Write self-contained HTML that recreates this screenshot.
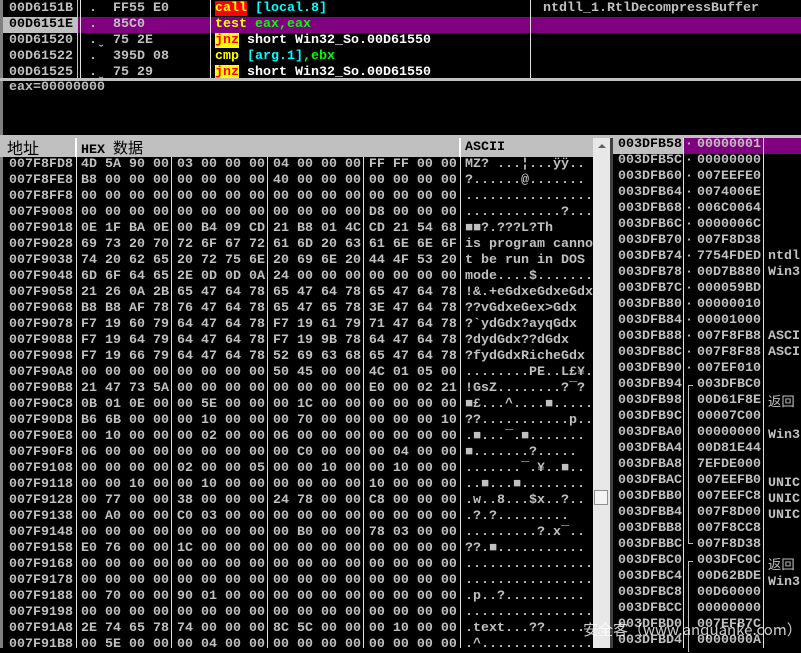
<!DOCTYPE html>
<html><head><meta charset="utf-8"><style>
*{margin:0;padding:0}
body{width:801px;height:648px;background:#000;position:relative;overflow:hidden;font-family:"Liberation Mono","Noto Sans CJK SC",monospace;font-weight:bold;font-size:13.33px;color:#c0c0c0}
.a{position:absolute}
pre{position:absolute;font:inherit;line-height:16px;white-space:pre;margin:0}
.vl{position:absolute;width:1px;background:#e0e0e0}
.g{background:#c0c0c0}
.y{color:#ffff00}.c{color:#00ffff}.gr{color:#00ff00}.w{color:#fff}
</style></head><body>
<div class="a" style="left:0;top:0;width:3px;height:80px;background:#808080"></div>
<div class="a" style="top:17px;left:3px;width:798px;height:16px;background:#800080"></div>
<div class="a g" style="left:3px;top:17px;width:74px;height:16px"></div>
<pre style="left:9px;top:1px;color:#c0c0c0">00D6151B
<span style="color:#000">00D6151E</span>
00D61520
00D61522
00D61525</pre>
<div class="vl" style="left:77px;top:0;height:78px;background:#c0c0c0"></div>
<div class="vl" style="left:80px;top:0;height:78px"></div>
<pre style="left:89px;top:1px">.  FF55 E0
.  85C0
.ˬ 75 2E
.  395D 08
.ˬ 75 29</pre>
<div class="vl" style="left:210px;top:0;height:78px"></div>
<pre style="left:215px;top:1px"><span class="y" style="background:#ff0000">call</span> <span class="c">[local.8]</span>
<span class="y">test</span> <span class="gr">eax,eax</span>
<span style="color:#ff0000;background:#ffff00">jnz</span> <span class="w">short Win32_So.00D61550</span>
<span class="y">cmp</span> <span class="c">[arg.1]</span><span class="gr">,ebx</span>
<span style="color:#ff0000;background:#ffff00">jnz</span> <span class="w">short Win32_So.00D61550</span></pre>
<div class="vl" style="left:530px;top:0;height:78px"></div>
<pre style="left:543px;top:1px">ntdll_1.RtlDecompressBuffer</pre>
<div class="a g" style="left:0;top:78px;width:801px;height:3px"></div>
<div class="a" style="left:0;top:81px;width:3px;height:56px;background:#808080"></div>
<pre style="left:9px;top:80px">eax=00000000</pre>
<div class="a g" style="left:0;top:135px;width:801px;height:3px"></div>
<div class="a g" style="left:0;top:138px;width:610px;height:19px"></div>
<div class="a" style="left:0;top:157px;width:3px;height:491px;background:#808080"></div>
<div class="a" style="left:75px;top:138px;width:2px;height:19px;background:#fff"></div>
<div class="a" style="left:459px;top:138px;width:2px;height:19px;background:#fff"></div>
<div class="a" style="font-family:'Noto Sans CJK SC',sans-serif;font-weight:normal;font-size:16px;line-height:19px;color:#000;left:7px;top:138px">地址</div>
<div class="a" style="color:#000;left:81px;top:138px;line-height:19px;font-size:13.33px">HEX <span style="font-family:'Noto Sans CJK SC',sans-serif;font-weight:normal;font-size:15px">数据</span></div>
<div class="a" style="color:#000;left:465px;top:138px;line-height:19px">ASCII</div>
<div class="vl" style="left:76px;top:157px;height:491px"></div>
<div class="vl" style="left:171px;top:157px;height:491px"></div>
<div class="vl" style="left:267px;top:157px;height:491px"></div>
<div class="vl" style="left:363px;top:157px;height:491px"></div>
<div class="vl" style="left:460px;top:157px;height:491px"></div>
<pre style="left:9px;top:157px">007F8FD8
007F8FE8
007F8FF8
007F9008
007F9018
007F9028
007F9038
007F9048
007F9058
007F9068
007F9078
007F9088
007F9098
007F90A8
007F90B8
007F90C8
007F90D8
007F90E8
007F90F8
007F9108
007F9118
007F9128
007F9138
007F9148
007F9158
007F9168
007F9178
007F9188
007F9198
007F91A8
007F91B8</pre>
<pre style="left:81px;top:157px">4D 5A 90 00 03 00 00 00 04 00 00 00 FF FF 00 00
B8 00 00 00 00 00 00 00 40 00 00 00 00 00 00 00
00 00 00 00 00 00 00 00 00 00 00 00 00 00 00 00
00 00 00 00 00 00 00 00 00 00 00 00 D8 00 00 00
0E 1F BA 0E 00 B4 09 CD 21 B8 01 4C CD 21 54 68
69 73 20 70 72 6F 67 72 61 6D 20 63 61 6E 6E 6F
74 20 62 65 20 72 75 6E 20 69 6E 20 44 4F 53 20
6D 6F 64 65 2E 0D 0D 0A 24 00 00 00 00 00 00 00
21 26 0A 2B 65 47 64 78 65 47 64 78 65 47 64 78
B8 B8 AF 78 76 47 64 78 65 47 65 78 3E 47 64 78
F7 19 60 79 64 47 64 78 F7 19 61 79 71 47 64 78
F7 19 64 79 64 47 64 78 F7 19 9B 78 64 47 64 78
F7 19 66 79 64 47 64 78 52 69 63 68 65 47 64 78
00 00 00 00 00 00 00 00 50 45 00 00 4C 01 05 00
21 47 73 5A 00 00 00 00 00 00 00 00 E0 00 02 21
0B 01 0E 00 00 5E 00 00 00 1C 00 00 00 00 00 00
B6 6B 00 00 00 10 00 00 00 70 00 00 00 00 00 10
00 10 00 00 00 02 00 00 06 00 00 00 00 00 00 00
06 00 00 00 00 00 00 00 00 C0 00 00 00 04 00 00
00 00 00 00 02 00 00 05 00 00 10 00 00 10 00 00
00 00 10 00 00 10 00 00 00 00 00 00 10 00 00 00
00 77 00 00 38 00 00 00 24 78 00 00 C8 00 00 00
00 A0 00 00 C0 03 00 00 00 00 00 00 00 00 00 00
00 00 00 00 00 00 00 00 00 B0 00 00 78 03 00 00
E0 76 00 00 1C 00 00 00 00 00 00 00 00 00 00 00
00 00 00 00 00 00 00 00 00 00 00 00 00 00 00 00
00 00 00 00 00 00 00 00 00 00 00 00 00 00 00 00
00 70 00 00 90 01 00 00 00 00 00 00 00 00 00 00
00 00 00 00 00 00 00 00 00 00 00 00 00 00 00 00
2E 74 65 78 74 00 00 00 8C 5C 00 00 00 10 00 00
00 5E 00 00 00 04 00 00 00 00 00 00 00 00 00 00</pre>
<pre style="left:465px;top:157px">MZ? ...¦...ÿÿ..
?......@.......
................
............?...
■■?.???L?Th
is program canno
t be run in DOS 
mode....$.......
!&.+eGdxeGdxeGdx
??vGdxeGex>Gdx
?`ydGdx?ayqGdx
?dydGdx??dGdx
?fydGdxRicheGdx
........PE..L£¥.
!GsZ........?¯?
■£...^....■.....
??...........p...
.■...¯.■.......
■.......?.....
.......¯.¥..■..
..■...■........
.w..8...$x..?..
.?.?.........
.........?.x¯..
??.■...........
................
................
.p..?..........
................
.text...??.....
.^..............</pre>
<div class="a" style="left:593px;top:138px;width:17px;height:510px;background:#e8e8e8"></div>
<div class="a" style="left:598px;top:144px;width:0;height:0;border-left:4px solid transparent;border-right:4px solid transparent;border-bottom:4px solid #606060"></div>
<div class="a" style="left:594px;top:490px;width:14px;height:15px;background:#f4f4f4;border:1px solid #909090;box-sizing:border-box"></div>
<div class="a" style="left:610px;top:138px;width:3px;height:510px;background:#404040"></div>
<div class="a g" style="left:613px;top:138px;width:70px;height:16px"></div>
<div class="a" style="left:684px;top:138px;width:117px;height:16px;background:#800080"></div>
<div class="vl" style="left:683px;top:138px;height:510px"></div>
<div class="vl" style="left:763px;top:138px;height:510px"></div>
<pre style="left:618px;top:137px"><span style="color:#000">003DFB58</span>
003DFB5C
003DFB60
003DFB64
003DFB68
003DFB6C
003DFB70
003DFB74
003DFB78
003DFB7C
003DFB80
003DFB84
003DFB88
003DFB8C
003DFB90
003DFB94
003DFB98
003DFB9C
003DFBA0
003DFBA4
003DFBA8
003DFBAC
003DFBB0
003DFBB4
003DFBB8
003DFBBC
003DFBC0
003DFBC4
003DFBC8
003DFBCC
003DFBD0
003DFBD4</pre>
<pre style="left:685px;top:137px">·
·
·
·
·
·
·
·
·
·
·
·
·
·
·</pre>
<pre style="left:697px;top:137px">00000001
00000000
007EEFE0
0074006E
006C0064
0000006C
007F8D38
7754FDED
00D7B880
000059BD
00000010
00001000
007F8FB8
007F8F88
007EF010
003DFBC0
00D61F8E
00007C00
00000000
00D81E44
7EFDE000
007EEFB0
007EEFC8
007F8D00
007F8CC8
007F8D38
003DFC0C
00D62BDE
00D60000
00000000
007EFB7C
0000000A</pre>
<div class="a" style="left:688px;top:385px;width:4px;height:157px;border-left:1px solid #c0c0c0;border-top:1px solid #c0c0c0;border-bottom:1px solid #c0c0c0"></div>
<div class="a" style="left:688px;top:561px;width:4px;height:90px;border-left:1px solid #c0c0c0;border-top:1px solid #c0c0c0"></div>
<pre style="left:768px;top:137px">







ntdl
Win3



ASCI
ASCI


<span style="font-family:'Noto Sans CJK SC',sans-serif;font-weight:normal">返回</span>

Win3


UNIC
UNIC
UNIC


<span style="font-family:'Noto Sans CJK SC',sans-serif;font-weight:normal">返回</span>
Win3</pre>
<div class="a" style="left:583px;top:619px;white-space:nowrap;font-family:'Noto Sans CJK SC',sans-serif;font-weight:normal;font-size:15px;color:rgba(255,255,255,0.8)">安全客（www.anquanke.com）</div>
</body></html>
